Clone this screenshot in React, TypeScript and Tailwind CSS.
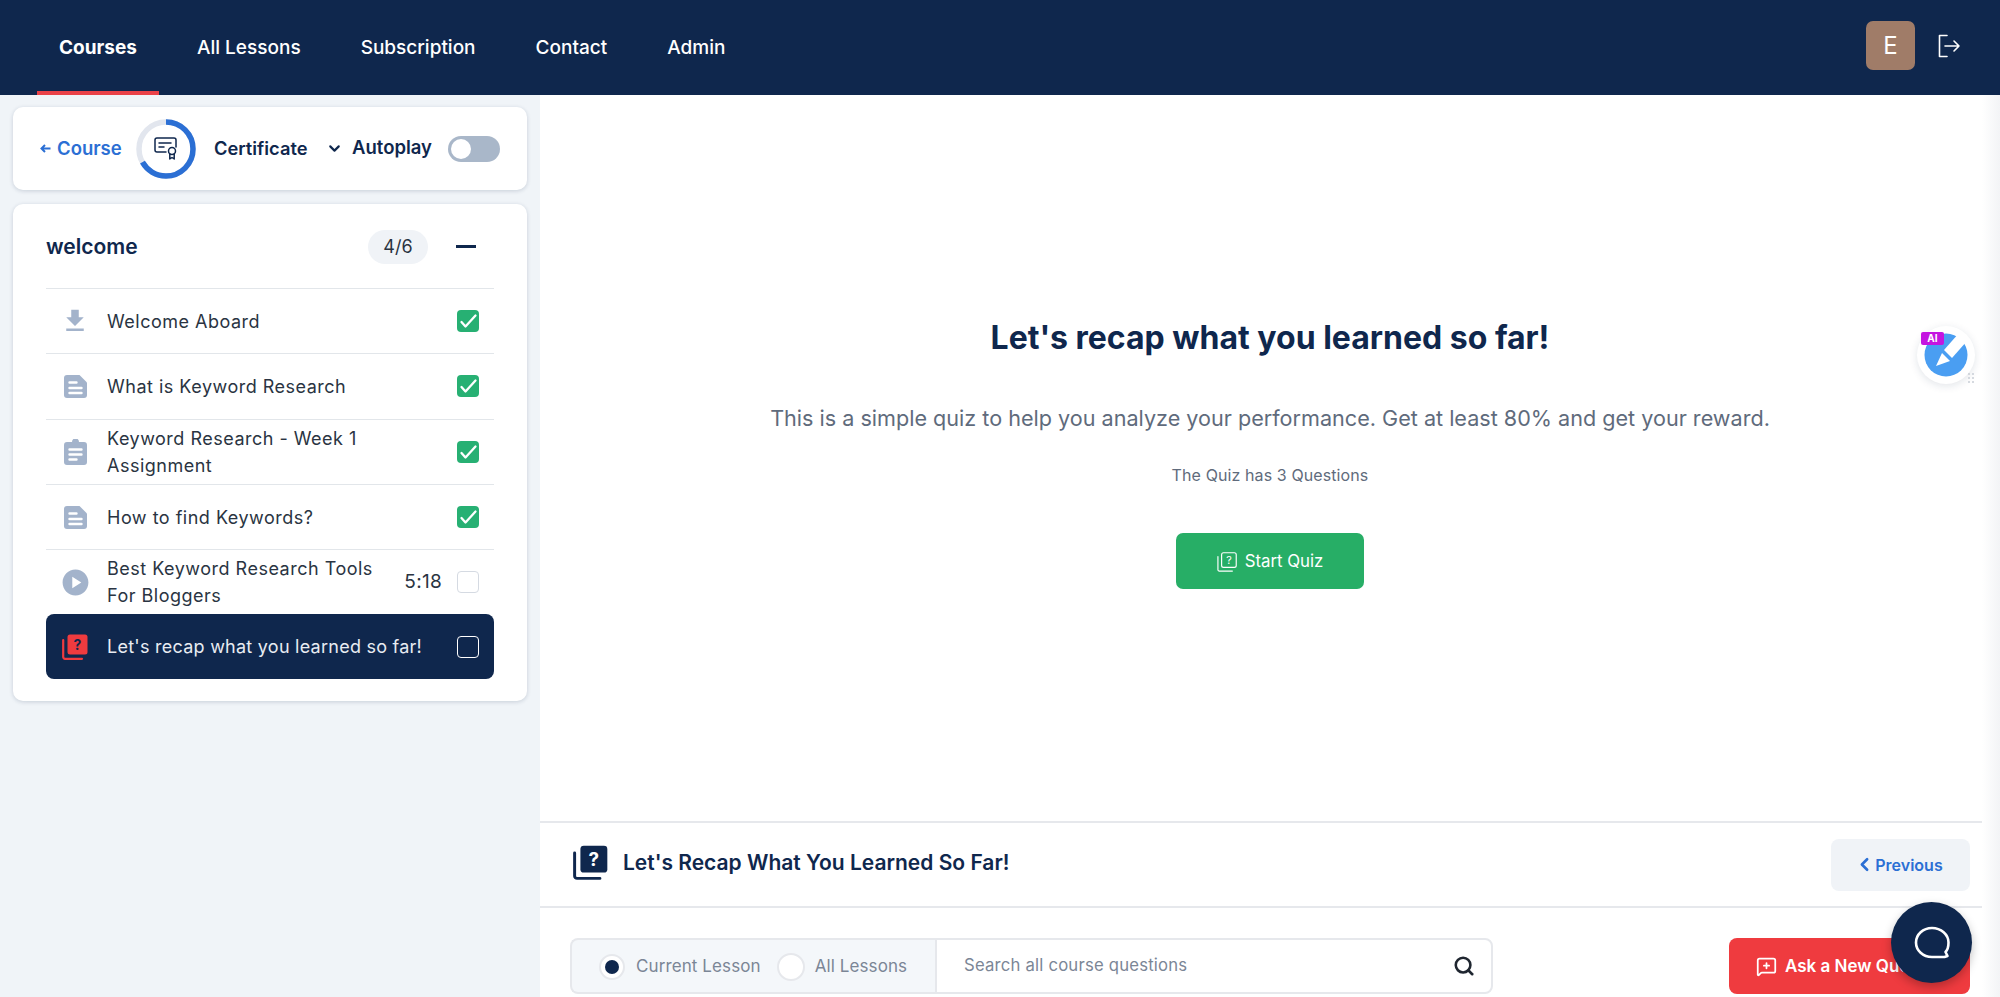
import { ChevronDown, ChevronLeft, MessageSquarePlus, Search } from 'lucide-react';
import { MdDownload, MdPlayCircle } from 'react-icons/md';

const navItems = ['All Lessons', 'Subscription', 'Contact', 'Admin'];

const lessons = [
  { title: 'Welcome Aboard', icon: 'download', done: true },
  { title: 'What is Keyword Research', icon: 'doc', done: true },
  { title: 'Keyword Research - Week 1 Assignment', icon: 'assignment', done: true },
  { title: 'How to find Keywords?', icon: 'doc', done: true },
  { title: 'Best Keyword Research Tools For Bloggers', icon: 'play', done: false, time: '5:18' },
];

function QuizIcon({ size, color, mark, outline }: { size: number; color: string; mark: string; outline?: boolean }) {
  return (
    <svg width={size} height={size} viewBox="0 0 26 26">
      <path d="M1.200 6v17a1.800 1.800 0 0 0 1.800 1.800h17" fill="none" stroke={color} strokeWidth={outline ? 1.5 : 2.2} strokeLinecap="round" />
      <rect
        x={outline ? 6 : 5.500}
        y={outline ? 1 : 0.500}
        width={outline ? 19 : 20}
        height={outline ? 19 : 20}
        rx="2.500"
        fill={outline ? 'none' : color}
        stroke={outline ? color : 'none'}
        strokeWidth="1.500"
      />
      <text x="15.500" y="15.500" textAnchor="middle" fontSize="14" fontWeight={outline ? 400 : 700} fill={mark}>?</text>
    </svg>
  );
}

function LessonIcon({ icon }: { icon: string }) {
  const cls = 'text-[#a3b3cb]';
  if (icon === 'download') return <MdDownload size={30} className={cls} />;
  if (icon === 'play') return <MdPlayCircle size={31} className={cls} />;
  if (icon === 'doc') {
    return (
      <svg width="23" height="23" viewBox="0 0 23 23">
        <path d="M3 0h12.500L23 7.500V20a3 3 0 0 1-3 3H3a3 3 0 0 1-3-3V3a3 3 0 0 1 3-3z" fill="#a3b3cb" />
        <path d="M5.500 7.500h7M5.500 13h12M5.500 18h12" stroke="white" strokeWidth="2.400" strokeLinecap="round" />
      </svg>
    );
  }
  return (
    <svg width="23" height="26" viewBox="0 0 23 26">
      <path d="M3 3h5a3.500 3.500 0 0 1 7 0h5a3 3 0 0 1 3 3v17a3 3 0 0 1-3 3H3a3 3 0 0 1-3-3V6a3 3 0 0 1 3-3z" fill="#a3b3cb" />
      <path d="M5.500 10.500h12M5.500 15.500h12M5.500 20.500h7" stroke="white" strokeWidth="2.400" strokeLinecap="round" />
    </svg>
  );
}

function CheckBox({ done, dark }: { done?: boolean; dark?: boolean }) {
  if (done) {
    return (
      <div className="w-[22px] h-[22px] rounded-[4px] bg-[#27b073] flex items-center justify-center">
        <svg width="20" height="20" viewBox="0 0 20 20" fill="none" stroke="white" strokeWidth="2.300" strokeLinecap="round" strokeLinejoin="round">
          <path d="M3.500 11l4 4.500L17.500 4.500" />
        </svg>
      </div>
    );
  }
  return (
    <div className={`w-[22px] h-[22px] rounded-[4px] border ${dark ? 'border-white' : 'border-[#d5dae2] bg-white'}`} />
  );
}

export default function App() {
  return (
    <div className="relative h-[997px] overflow-hidden flex flex-col bg-white font-['Inter',sans-serif]">
      {/* Top nav */}
      <header className="h-[95px] shrink-0 bg-[#0f274d] flex items-stretch justify-between pl-[37px] pr-[39px]">
        <nav className="flex items-stretch text-white text-[19px] font-medium">
          <a className="w-[122px] mr-[38px] flex items-center justify-center font-bold border-b-4 border-[#ea4248] pt-[5px]">Courses</a>
          {navItems.map((item) => (
            <a key={item} className="mr-[60px] flex items-center pt-[1px]">{item}</a>
          ))}
        </nav>
        <div className="flex items-center gap-[22px] mb-[4px]">
          <div className="w-[49px] h-[49px] rounded-[7px] bg-[#a07c68] flex items-center justify-center text-white text-[24px]">E</div>
          <svg width="24" height="24" viewBox="0 0 24 24" fill="none" stroke="white" strokeWidth="1.600" strokeLinecap="round" strokeLinejoin="round">
            <path d="M10 1.500H2.500v21H10" />
            <path d="M8 12h14M17 7l5 5-5 5" />
          </svg>
        </div>
      </header>

      <div className="flex flex-1 min-h-0">
        {/* Sidebar */}
        <aside className="w-[540px] shrink-0 bg-[#f0f4f8] px-[13px] pt-[12px]">
          <div className="h-[83px] bg-white rounded-[10px] shadow-[0_1px_4px_rgba(15,39,77,0.18)] flex items-center pl-[27px]">
            <a className="flex items-center text-[18.500px] font-semibold text-[#2b6fd4] w-[96px] shrink-0">
              <svg width="11" height="11" viewBox="0 0 11 11" fill="none" stroke="currentColor" strokeWidth="2" className="mr-[6px]">
                <path d="M10.500 5.500H1.500M5 2L1.500 5.500 5 9" />
              </svg>
              Course
            </a>
            <div className="relative w-[60px] h-[60px] flex items-center justify-center shrink-0">
              <svg width="60" height="60" viewBox="0 0 60 60" className="absolute inset-0 -rotate-90">
                <circle cx="30" cy="30" r="27" fill="none" stroke="#e2e6ee" strokeWidth="5.500" />
                <circle cx="30" cy="30" r="27" fill="none" stroke="#2b6fd4" strokeWidth="5.500" strokeDasharray="113 170" />
              </svg>
              <svg width="24" height="23" viewBox="0 0 24 23" fill="none" stroke="#0f274d" strokeWidth="1.500" strokeLinecap="round" strokeLinejoin="round">
                <path d="M12 15H3a2 2 0 0 1-2-2V3a2 2 0 0 1 2-2h17a2 2 0 0 1 2 2v7" />
                <path d="M5 6h12M5 10h5" />
                <circle cx="18" cy="14" r="3.500" />
                <path d="M15.800 17v5l2.200-1.500 2.200 1.500v-5" />
              </svg>
            </div>
            <span className="ml-[18px] w-[112px] shrink-0 text-[18.300px] font-semibold text-[#0f274d]">Certificate</span>
            <ChevronDown size={17} strokeWidth={3} className="text-[#0f274d] shrink-0" />
            <span className="ml-[9px] w-[80px] shrink-0 text-[18.500px] font-semibold text-[#0f274d] mb-[1px]">Autoplay</span>
            <div className="ml-[16px] w-[52px] h-[26px] shrink-0 rounded-full bg-[#a9b7c9] flex items-center pl-[3px]">
              <div className="w-[20px] h-[20px] rounded-full bg-white" />
            </div>
          </div>

          <div className="mt-[14px] h-[497px] bg-white rounded-[10px] shadow-[0_1px_4px_rgba(15,39,77,0.18)] px-[33px]">
            <div className="h-[84px] flex items-center pt-[1px]">
              <span className="flex-1 text-[21px] font-semibold text-[#0f274d]">welcome</span>
              <span className="w-[60px] h-[34px] rounded-full bg-[#f0f3f7] flex items-center justify-center text-[18px] text-[#2a3442]">4/6</span>
              <span className="ml-[28px] mr-[18px] w-[20px] h-[3px] bg-[#0f274d]" />
            </div>
            {lessons.map((l) => (
              <div key={l.title} className="h-[65.300px] border-t-[1.500px] border-[#e2e6ea] flex items-center">
                <div className="w-[58px] flex justify-center shrink-0">
                  <LessonIcon icon={l.icon} />
                </div>
                <span className="ml-[3px] flex-1 pr-[20px] text-[18px] leading-[27px] tracking-[0.5px] text-[#2a3442]">{l.title}</span>
                {l.time && <span className="text-[19px] tracking-[0.3px] text-[#2a3442] mr-[15px]">{l.time}</span>}
                <div className="mr-[15px]">
                  <CheckBox done={l.done} />
                </div>
              </div>
            ))}
            <div className="h-[65px] rounded-[8px] bg-[#0f274d] flex items-center">
              <div className="w-[58px] flex justify-center shrink-0">
                <QuizIcon size={26} color="#ef3b3f" mark="#0f274d" />
              </div>
              <span className="ml-[3px] flex-1 text-[18px] tracking-[0.25px] text-[#e8ecf2] whitespace-nowrap">Let's recap what you learned so far!</span>
              <div className="mr-[15px]">
                <CheckBox dark />
              </div>
            </div>
          </div>
        </aside>

        {/* Main */}
        <main className="flex-1 min-w-0 flex flex-col">
          <section className="h-[726px] shrink-0 flex flex-col items-center pt-[218px]">
            <h1 className="text-[32px] leading-[50px] font-bold text-[#0f274d]">Let's recap what you learned so far!</h1>
            <p className="mt-[39px] text-[21.600px] leading-[32px] text-[#5f6b7c]">This is a simple quiz to help you analyze your performance. Get at least 80% and get your reward.</p>
            <p className="mt-[29px] text-[16px] leading-[24px] tracking-[0.1px] text-[#5f6b7c]">The Quiz has 3 Questions</p>
            <button className="mt-[46px] w-[188px] h-[56px] rounded-[7px] bg-[#27ae66] flex items-center justify-center gap-[8px] pt-[1px] text-white text-[16.800px]">
              <QuizIcon size={20} color="white" mark="white" outline />
              Start Quiz
            </button>
          </section>

          <section className="h-[87px] shrink-0 border-t-2 border-b-2 border-[#e6e8ec] flex items-center justify-between pl-[33px] pr-[30px]">
            <div className="flex items-center gap-[15px] mb-[4px]">
              <QuizIcon size={35} color="#0f274d" mark="white" />
              <span className="text-[21px] font-semibold text-[#0f274d]">Let's Recap What You Learned So Far!</span>
            </div>
            <button className="w-[139px] h-[52px] rounded-[8px] bg-[#f0f3f7] flex items-center justify-center pr-[4px] text-[16px] font-semibold text-[#2b6fd4]">
              <ChevronLeft size={21} strokeWidth={3} />
              Previous
            </button>
          </section>

          <section className="flex justify-between pl-[30px] pr-[30px] pt-[30px]">
            <div className="flex h-[56px]">
              <div className="w-[365px] rounded-l-[8px] border-2 border-r-0 border-[#e6e8ec] bg-[#f4f7fa] flex items-center pl-[27px] pt-[1px] text-[17px] tracking-[0.1px] text-[#7b8696]">
                <span className="w-[26px] h-[26px] rounded-full bg-white border-2 border-[#e6e8ec] flex items-center justify-center">
                  <span className="w-[14px] h-[14px] rounded-full bg-[#0f274d]" />
                </span>
                <span className="ml-[11px]">Current Lesson</span>
                <span className="ml-[16px] w-[28px] h-[28px] rounded-full bg-white border-2 border-[#e6e8ec]" />
                <span className="ml-[10px]">All Lessons</span>
              </div>
              <div className="w-[558px] rounded-r-[8px] border-2 border-[#e6e8ec] flex items-center justify-between pl-[27px] pr-[16px]">
                <span className="text-[16.700px] tracking-[0.2px] text-[#7b8696]">Search all course questions</span>
                <Search size={22} strokeWidth={2.800} className="text-[#1f2630]" />
              </div>
            </div>
            <button className="w-[241px] h-[56px] rounded-[8px] bg-[#ef3b3f] flex items-center pl-[27px] pt-[1px] gap-[8px] text-white text-[17px] font-semibold">
              <MessageSquarePlus size={21} />
              Ask a New Question
            </button>
          </section>
        </main>
      </div>

      {/* right edge shadow */}
      <div className="absolute right-0 top-[95px] bottom-0 w-[18px] bg-gradient-to-r from-white to-[#f3f4f6]" />

      {/* AI widget */}
      <div className="absolute left-[1917px] top-[326px] w-[58px] h-[58px] rounded-full bg-white shadow-[0_2px_8px_rgba(15,39,77,0.12)] flex items-center justify-center">
        <svg width="44" height="44" viewBox="0 0 44 44" className="overflow-visible">
          <circle cx="22" cy="22" r="21.500" fill="#4a9ef2" />
          <path d="M35 0L43 8 28 25 20 17z" fill="white" />
          <path d="M18 20l8 8-14 5z" fill="white" />
        </svg>
        <span className="absolute left-[4px] top-[6px] w-[23px] h-[13px] rounded-[2px] bg-[#c415e0] text-white text-[10px] leading-[13px] font-bold text-center">AI</span>
        <span className="absolute right-[1px] bottom-[1px] grid grid-cols-2 gap-[2px]">
          {[0, 1, 2, 3, 4, 5].map((d) => (
            <span key={d} className="w-[2px] h-[2px] rounded-full bg-[#c8ced6]" />
          ))}
        </span>
      </div>

      {/* Chat bubble */}
      <div className="absolute left-[1891px] top-[902px] w-[81px] h-[81px] rounded-full bg-[#0f274d] shadow-[0_4px_10px_rgba(0,0,0,0.25)] flex items-center justify-center">
        <svg width="36" height="34" viewBox="0 0 36 34" fill="none" stroke="white" strokeWidth="2.600" strokeLinejoin="round">
          <path d="M18 2C9 2 2 8.500 2 16.500S9 31 18 31h12.500l3-1-2-4c2.500-2.500 3-6 3-9.500C34.500 8.500 27 2 18 2z" />
        </svg>
      </div>
    </div>
  );
}
